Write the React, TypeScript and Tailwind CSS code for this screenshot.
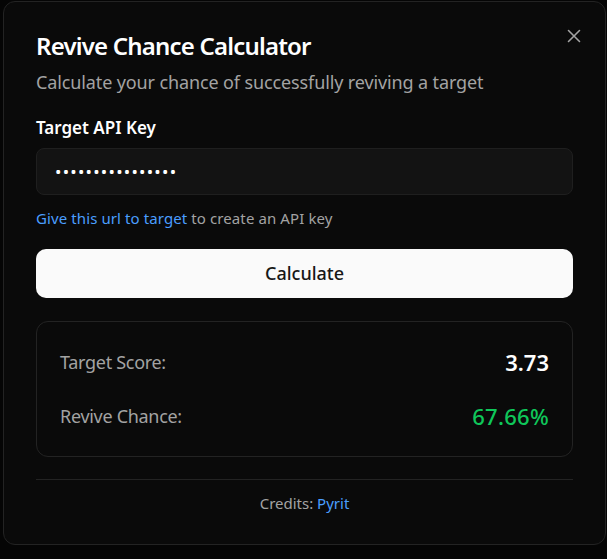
import React from 'react';

const font = { fontFamily: '"Noto Sans", "Open Sans", sans-serif' };

const CloseIcon = () => (
    <svg width="16" height="16" viewBox="0 0 16 16" fill="none" stroke="currentColor" strokeWidth="1.6" strokeLinecap="round">
        <path d="M2.5 2.5l11 11M13.5 2.5l-11 11" />
    </svg>
);

export default function App() {
    return (
        <div className="min-h-[559px] bg-[#050505] pt-[1px] pl-[3px] pr-[1px]" style={font}>
            <div className="relative w-[603px] rounded-xl border border-[#232323] bg-[#0a0a0a] px-8 pt-7 pb-[30px]">
                <button className="absolute right-[23px] top-[26px] text-[#a3a3a3]">
                    <CloseIcon />
                </button>

                <h2 className="text-2xl font-semibold leading-8 text-white tracking-[-0.8px]">Revive Chance Calculator</h2>
                <p className="mt-1.5 text-lg leading-7 text-[#a3a3a3] tracking-[-0.12px]">
                    Calculate your chance of successfully reviving a target
                </p>

                <label className="mt-5 block text-[17px] font-semibold leading-6 text-white">Target API Key</label>
                <div className="mt-2 flex h-[47px] items-center rounded-lg border border-[#1f1f1f] bg-[#131313] px-[18px]">
                    <span className="text-[17px] tracking-[1.25px] text-white">{'•'.repeat(16)}</span>
                </div>

                <p className="mt-3 text-[15px] leading-[22px] text-[#a3a3a3] tracking-[0.1px]">
                    <a className="text-[#4a9eff]">Give this url to target</a> to create an API key
                </p>

                <button className="mt-5 flex h-[49px] w-full items-center justify-center rounded-[10px] bg-[#fafafa] text-[18px] font-medium text-[#171717]">
                    Calculate
                </button>

                <div className="mt-[23px] flex flex-col gap-[22px] rounded-xl border border-[#232323] px-[23px] py-6">
                    <div className="flex h-8 items-center justify-between">
                        <span className="text-lg text-[#a3a3a3] tracking-[-0.3px]">Target Score:</span>
                        <span className="text-[22px] font-semibold text-white">3.73</span>
                    </div>
                    <div className="flex h-8 items-center justify-between">
                        <span className="text-lg text-[#a3a3a3] tracking-[-0.3px]">Revive Chance:</span>
                        <span className="text-[22px] font-medium text-[#0fc75a] tracking-[0.3px]">67.66%</span>
                    </div>
                </div>

                <div className="mt-[22px] border-t border-[#232323] pt-3 text-center text-[15px] leading-[22px] text-[#a3a3a3]">
                    Credits: <a className="text-[#4a9eff]">Pyrit</a>
                </div>
            </div>
        </div>
    );
}
